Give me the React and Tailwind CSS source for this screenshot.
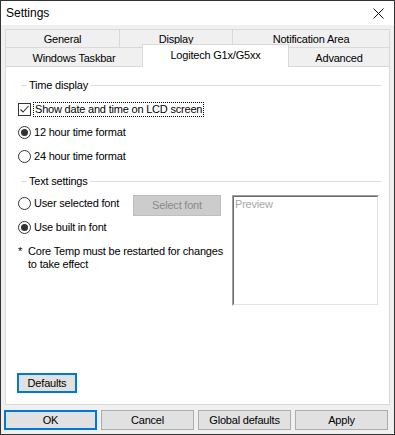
import React from "react";

function Radio({ checked, label }) {
  return (
    <div className="flex items-center h-[15px]">
      <span className="w-[13px] h-[13px] rounded-full border border-[#333] bg-white flex items-center justify-center">
        {checked && <span className="w-[7px] h-[7px] rounded-full bg-[#333]" />}
      </span>
      <span className="ml-[3px]">{label}</span>
    </div>
  );
}

function GroupHeader({ title }) {
  return (
    <div className="flex items-center h-[13px] ml-[15px] mr-[8px]">
      <div className="w-[6px] h-px bg-[#dcdcdc]" />
      <span className="px-[2px]">{title}</span>
      <div className="flex-1 h-px bg-[#dcdcdc]" />
    </div>
  );
}

function Btn({ children, focus, className = "" }) {
  return (
    <button
      className={
        "h-[20px] bg-[#e1e1e1] flex items-center justify-center " +
        (focus ? "border-2 border-[#0078d7] " : "border border-[#adadad] ") +
        className
      }
    >
      {children}
    </button>
  );
}

export default function App() {
  const row1 = [
    ["General", "w-[114px]"],
    ["Display", "w-[113px]"],
    ["Notification Area", "flex-1"],
  ];

  return (
    <div className="w-[395px] h-[435px] border border-[#333] bg-[#f0f0f0] flex flex-col font-['Liberation_Sans',Arial,sans-serif] text-[11px] tracking-[-0.2px] text-black leading-none">
      {/* title bar */}
      <div className="h-[24px] bg-white flex items-center justify-between pl-[5px] pr-[10px]">
        <span className="text-[12px] tracking-normal">Settings</span>
        <svg width="11" height="11" viewBox="0 0 11 11">
          <path d="M0.5 0.5 L10.5 10.5 M10.5 0.5 L0.5 10.5" stroke="#111" strokeWidth="1" fill="none" />
        </svg>
      </div>

      <div className="mx-[4px] mt-[4px] flex flex-col">
        {/* tab row 1 */}
        <div className="flex h-[18px]">
          {row1.map(([t, w], i) => (
            <div
              key={t}
              className={
                w +
                " border-t border-l border-[#d9d9d9] bg-[#f0f0f0] flex items-center justify-center pt-[1px] " +
                (i === row1.length - 1 ? "border-r" : "")
              }
            >
              {t}
            </div>
          ))}
        </div>
        {/* tab row 2 */}
        <div className="flex h-[19px] items-end">
          <div className="w-[137px] h-[19px] border-t border-l border-[#d9d9d9] bg-[#f0f0f0] flex items-center justify-center pt-[2px]">
            Windows Taskbar
          </div>
          <div className="relative top-[1px] z-10 w-[147px] h-[23px] border-t border-l border-r border-[#d9d9d9] bg-white flex items-center justify-center pb-[2px]">
            Logitech G1x/G5xx
          </div>
          <div className="flex-1 h-[19px] border-t border-r border-[#d9d9d9] bg-[#f0f0f0] flex items-center justify-center pt-[2px]">
            Advanced
          </div>
        </div>

        {/* panel */}
        <div className="h-[339px] border border-[#d9d9d9] bg-white flex flex-col">
          <div className="mt-[12px]">
            <GroupHeader title="Time display" />
          </div>

          <div className="mt-[10px] ml-[12px] flex items-center h-[15px]">
            <span className="w-[13px] h-[13px] border border-[#333] bg-white flex items-center justify-center">
              <svg width="11" height="11" viewBox="0 0 11 11">
                <path d="M1.5 5.5 L4 8 L9.5 2" stroke="#333" strokeWidth="1.1" fill="none" />
              </svg>
            </span>
            <span className="ml-[2px] h-[15px] px-[1px] border border-dotted border-black flex items-center">
              Show date and time on LCD screen
            </span>
          </div>

          <div className="mt-[8px] ml-[12px]">
            <Radio checked label="12 hour time format" />
          </div>
          <div className="mt-[9px] ml-[12px]">
            <Radio label="24 hour time format" />
          </div>

          <div className="mt-[11px]">
            <GroupHeader title="Text settings" />
          </div>

          <div className="mt-[7px] ml-[12px] flex">
            <div className="w-[214px] flex flex-col">
              <div className="flex items-start h-[21px]">
                <div className="mt-[1px] w-[115px]">
                  <Radio label="User selected font" />
                </div>
                <div className="w-[88px] h-[21px] bg-[#cccccc] border border-[#bfbfbf] text-[#8a8a8a] flex items-center justify-center">
                  Select font
                </div>
              </div>
              <div className="mt-[4px]">
                <Radio checked label="Use built in font" />
              </div>
              <div className="mt-[10px] flex leading-[13px]">
                <span className="w-[10px]">*</span>
                <span>
                  Core Temp must be restarted for changes
                  <br />
                  to take effect
                </span>
              </div>
            </div>
            <div className="w-[147px] h-[111px] border border-t-[#a0a0a0] border-l-[#a0a0a0] border-r-white border-b-white">
              <div className="w-full h-full border border-t-[#696969] border-l-[#696969] border-r-[#e3e3e3] border-b-[#e3e3e3] bg-white text-[#a8a8a8] pt-[2px] pl-[1px]">
                Preview
              </div>
            </div>
          </div>

          <div className="mt-auto mb-[11px] ml-[11px]">
            <Btn focus className="w-[60px]">Defaults</Btn>
          </div>
        </div>
      </div>

      {/* bottom buttons */}
      <div className="mt-[5px] px-[3px] flex gap-[4px]">
        <Btn focus className="w-[93px]">OK</Btn>
        <Btn className="w-[93px]">Cancel</Btn>
        <Btn className="w-[93px]">Global defaults</Btn>
        <Btn className="w-[93px]">Apply</Btn>
      </div>
    </div>
  );
}
